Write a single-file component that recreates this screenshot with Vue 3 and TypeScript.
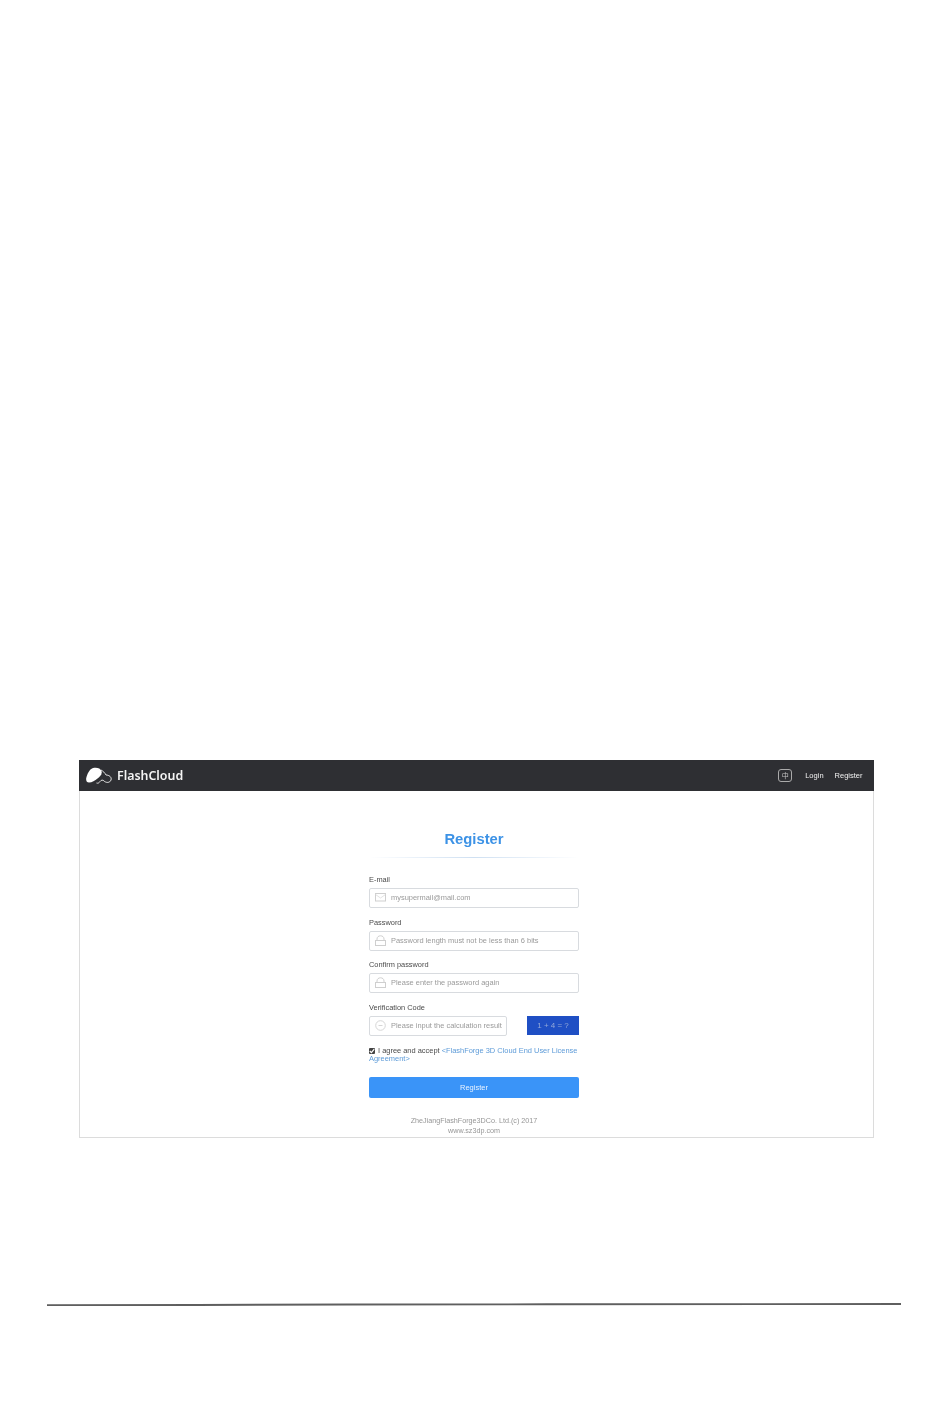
<script setup lang="ts">
const fields = [
  { label: 'E-mail', placeholder: 'mysupermail@mail.com', icon: 'mail' },
  { label: 'Password', placeholder: 'Password length must not be less than 6 bits', icon: 'lock' },
  { label: 'Confirm password', placeholder: 'Please enter the password again', icon: 'lock' }
]
</script>

<template>
  <div class="page">
    <div class="frame">
      <header class="topbar">
        <div class="brand">
          <svg class="logo" width="26" height="17" viewBox="0 0 26 17">
            <path d="M3 15.500C0.500 15.500 -0.500 13 0.500 10 1.500 7 3 2.500 7 1 10.500 0 14.500 1 15.500 4 16.500 7.500 14 9.500 11.500 11.500 9 13.500 6 15.500 3 15.500Z" fill="#fff" />
            <path d="M15 3C17 4 19 6 20 8 23 8 26 10 25 13 24 16 20 16 18 14 17 12.500 15 13 14 14.500 13 16 12 16.500 10.500 16" fill="none" stroke="#dedede" stroke-width="1" />
          </svg>
          <span class="brand-name">FlashCloud</span>
        </div>
        <nav class="nav">
          <span class="lang"><i class="lang-glyph">中</i></span>
          <a class="nav-link login">Login</a>
          <a class="nav-link">Register</a>
        </nav>
      </header>

      <main class="content">
        <h1 class="title">Register</h1>
        <div class="divider"></div>

        <form class="form" @submit.prevent>
          <div v-for="f in fields" :key="f.label" class="field">
            <label class="label">{{ f.label }}</label>
            <div class="input">
              <svg v-if="f.icon === 'mail'" class="icon" width="11" height="9" viewBox="0 0 11 9">
                <rect x="0.5" y="0.500" width="10" height="7.500" fill="none" stroke="#cfcfcf" />
                <path d="M0.500 1.500 5.500 5 10.500 1.500" fill="none" stroke="#dadada" stroke-width="0.800" />
              </svg>
              <svg v-else class="icon" width="11" height="11" viewBox="0 0 11 11">
                <path d="M2 5.500V4C2 2 3.500 0.800 5.500 0.800S9 2 9 4V5.500" fill="none" stroke="#cfcfcf" />
                <rect x="0.500" y="5.500" width="10" height="5" fill="none" stroke="#cfcfcf" />
              </svg>
              <span class="placeholder">{{ f.placeholder }}</span>
            </div>
          </div>

          <div class="field">
            <label class="label">Verification Code</label>
            <div class="code-row">
              <div class="input code-input">
                <svg class="icon" width="11" height="11" viewBox="0 0 11 11">
                  <circle cx="5.500" cy="5.500" r="4.800" fill="none" stroke="#d6d6d6" />
                  <path d="M3.500 5.500H7.500" stroke="#d6d6d6" />
                </svg>
                <span class="placeholder">Please input the calculation result</span>
              </div>
              <div class="captcha">1 + 4 = ?</div>
            </div>
          </div>

          <div class="agree">
            <div class="agree-line">
              <span class="check">
                <svg width="6" height="6" viewBox="0 0 6 6">
                  <path d="M0.800 3 2.400 4.700 5.200 1.200" fill="none" stroke="#fff" stroke-width="1.200" />
                </svg>
              </span>
              <span>I agree and accept</span>
              <a class="agree-link">&lt;FlashForge 3D Cloud End User License</a>
            </div>
            <a class="agree-link second">Agreement&gt;</a>
          </div>

          <button class="submit" type="submit">Register</button>
        </form>

        <footer class="copy">
          <div>ZheJiangFlashForge3DCo. Ltd.(c) 2017</div>
          <div>www.sz3dp.com</div>
        </footer>
      </main>
    </div>

    <svg class="rule" width="854" height="3" viewBox="0 0 854 3">
      <polyline points="0,2.300 150,2 300,1.500 500,1.300 854,1" fill="none" stroke="#5f5f5f" stroke-width="1.900" />
    </svg>
  </div>
</template>

<style>
html,
body {
  background: #fff;
}
</style>

<style scoped>
.page {
  height: 1419px;
  padding-top: 760px;
  box-sizing: border-box;
  font-family: 'Liberation Sans', Arial, sans-serif;
  color: #555;
  overflow: hidden;
}
.frame {
  width: 795px;
  height: 378px;
  margin-left: 78.500px;
  box-sizing: border-box;
  border: 1px solid #dcdcdc;
  border-top: none;
  display: flex;
  flex-direction: column;
  filter: blur(0.3px);
}
.topbar {
  height: 31px;
  margin: 0 -1px;
  flex: none;
  background: #2e2f33;
  display: flex;
  align-items: center;
  justify-content: space-between;
  padding: 0 11px 0 7.500px;
}
.brand {
  display: flex;
  align-items: center;
  gap: 5px;
}
.brand-name {
  font-family: 'Noto Sans', sans-serif;
  font-weight: 600;
  font-size: 12.400px;
  color: #f4f4f4;
}
.nav {
  display: flex;
  align-items: center;
}
.lang {
  width: 12px;
  height: 11px;
  border: 1px solid #aaa;
  border-radius: 3px;
  display: flex;
  align-items: center;
  justify-content: center;
  margin-right: 13px;
}
.lang-glyph {
  font-family: 'Noto Sans CJK SC', sans-serif;
  font-style: normal;
  font-size: 7px;
  line-height: 1;
  color: #c4c4c4;
}
.nav-link {
  font-size: 7.500px;
  color: #f0f0f0;
}
.login {
  margin-right: 11px;
}
.content {
  width: 210px;
  margin-left: 289.500px;
  flex: 1;
  display: flex;
  flex-direction: column;
}
.title {
  margin: 38px 0 0;
  height: 20px;
  line-height: 20px;
  text-align: center;
  font-size: 14.800px;
  font-weight: 700;
  color: #3c92e6;
}
.divider {
  height: 1px;
  margin-top: 8px;
  background: linear-gradient(90deg, #fff, #cfe0f2 50%, #fff);
}
.form {
  display: flex;
  flex-direction: column;
  margin-top: 17px;
}
.field {
  margin-bottom: 9.670px;
}
.label {
  display: block;
  height: 10px;
  line-height: 10px;
  font-size: 7.400px;
  color: #4a4a4a;
  margin-bottom: 3px;
}
.input {
  height: 20px;
  box-sizing: border-box;
  border: 1px solid #d8dbdf;
  border-radius: 2px;
  display: flex;
  align-items: center;
  padding: 0 0 1px 5px;
  background: #fff;
}
.icon {
  flex: none;
  margin-right: 5px;
}
.placeholder {
  font-size: 7.450px;
  color: #9a9a9a;
  white-space: nowrap;
}
.code-row {
  display: flex;
  justify-content: space-between;
  align-items: flex-start;
}
.code-input {
  width: 138px;
}
.captcha {
  width: 52px;
  height: 19px;
  background: #1f4fc4;
  color: #93a8d8;
  font-size: 8px;
  display: flex;
  align-items: center;
  justify-content: center;
}
.agree {
  margin-top: 1.500px;
  font-size: 7.450px;
  line-height: 8px;
  color: #4a4a4a;
}
.agree-line {
  display: flex;
  align-items: center;
  gap: 2px;
  white-space: nowrap;
}
.check {
  display: inline-flex;
  align-items: center;
  justify-content: center;
  width: 6px;
  height: 6px;
  background: #444;
  border-radius: 1px;
  margin-right: 1px;
}
.agree-link {
  color: #5d9bd8;
}
.second {
  display: block;
}
.submit {
  height: 21px;
  margin-top: 13.500px;
  border: none;
  border-radius: 2px;
  background: #3a94f8;
  color: #e8f2ff;
  font-family: inherit;
  font-size: 7.500px;
  padding: 0;
}
.copy {
  margin-top: 18px;
  text-align: center;
  font-size: 7.200px;
  line-height: 10px;
  color: #969696;
}
.rule {
  display: block;
  margin: 165px 0 0 47px;
}
</style>
